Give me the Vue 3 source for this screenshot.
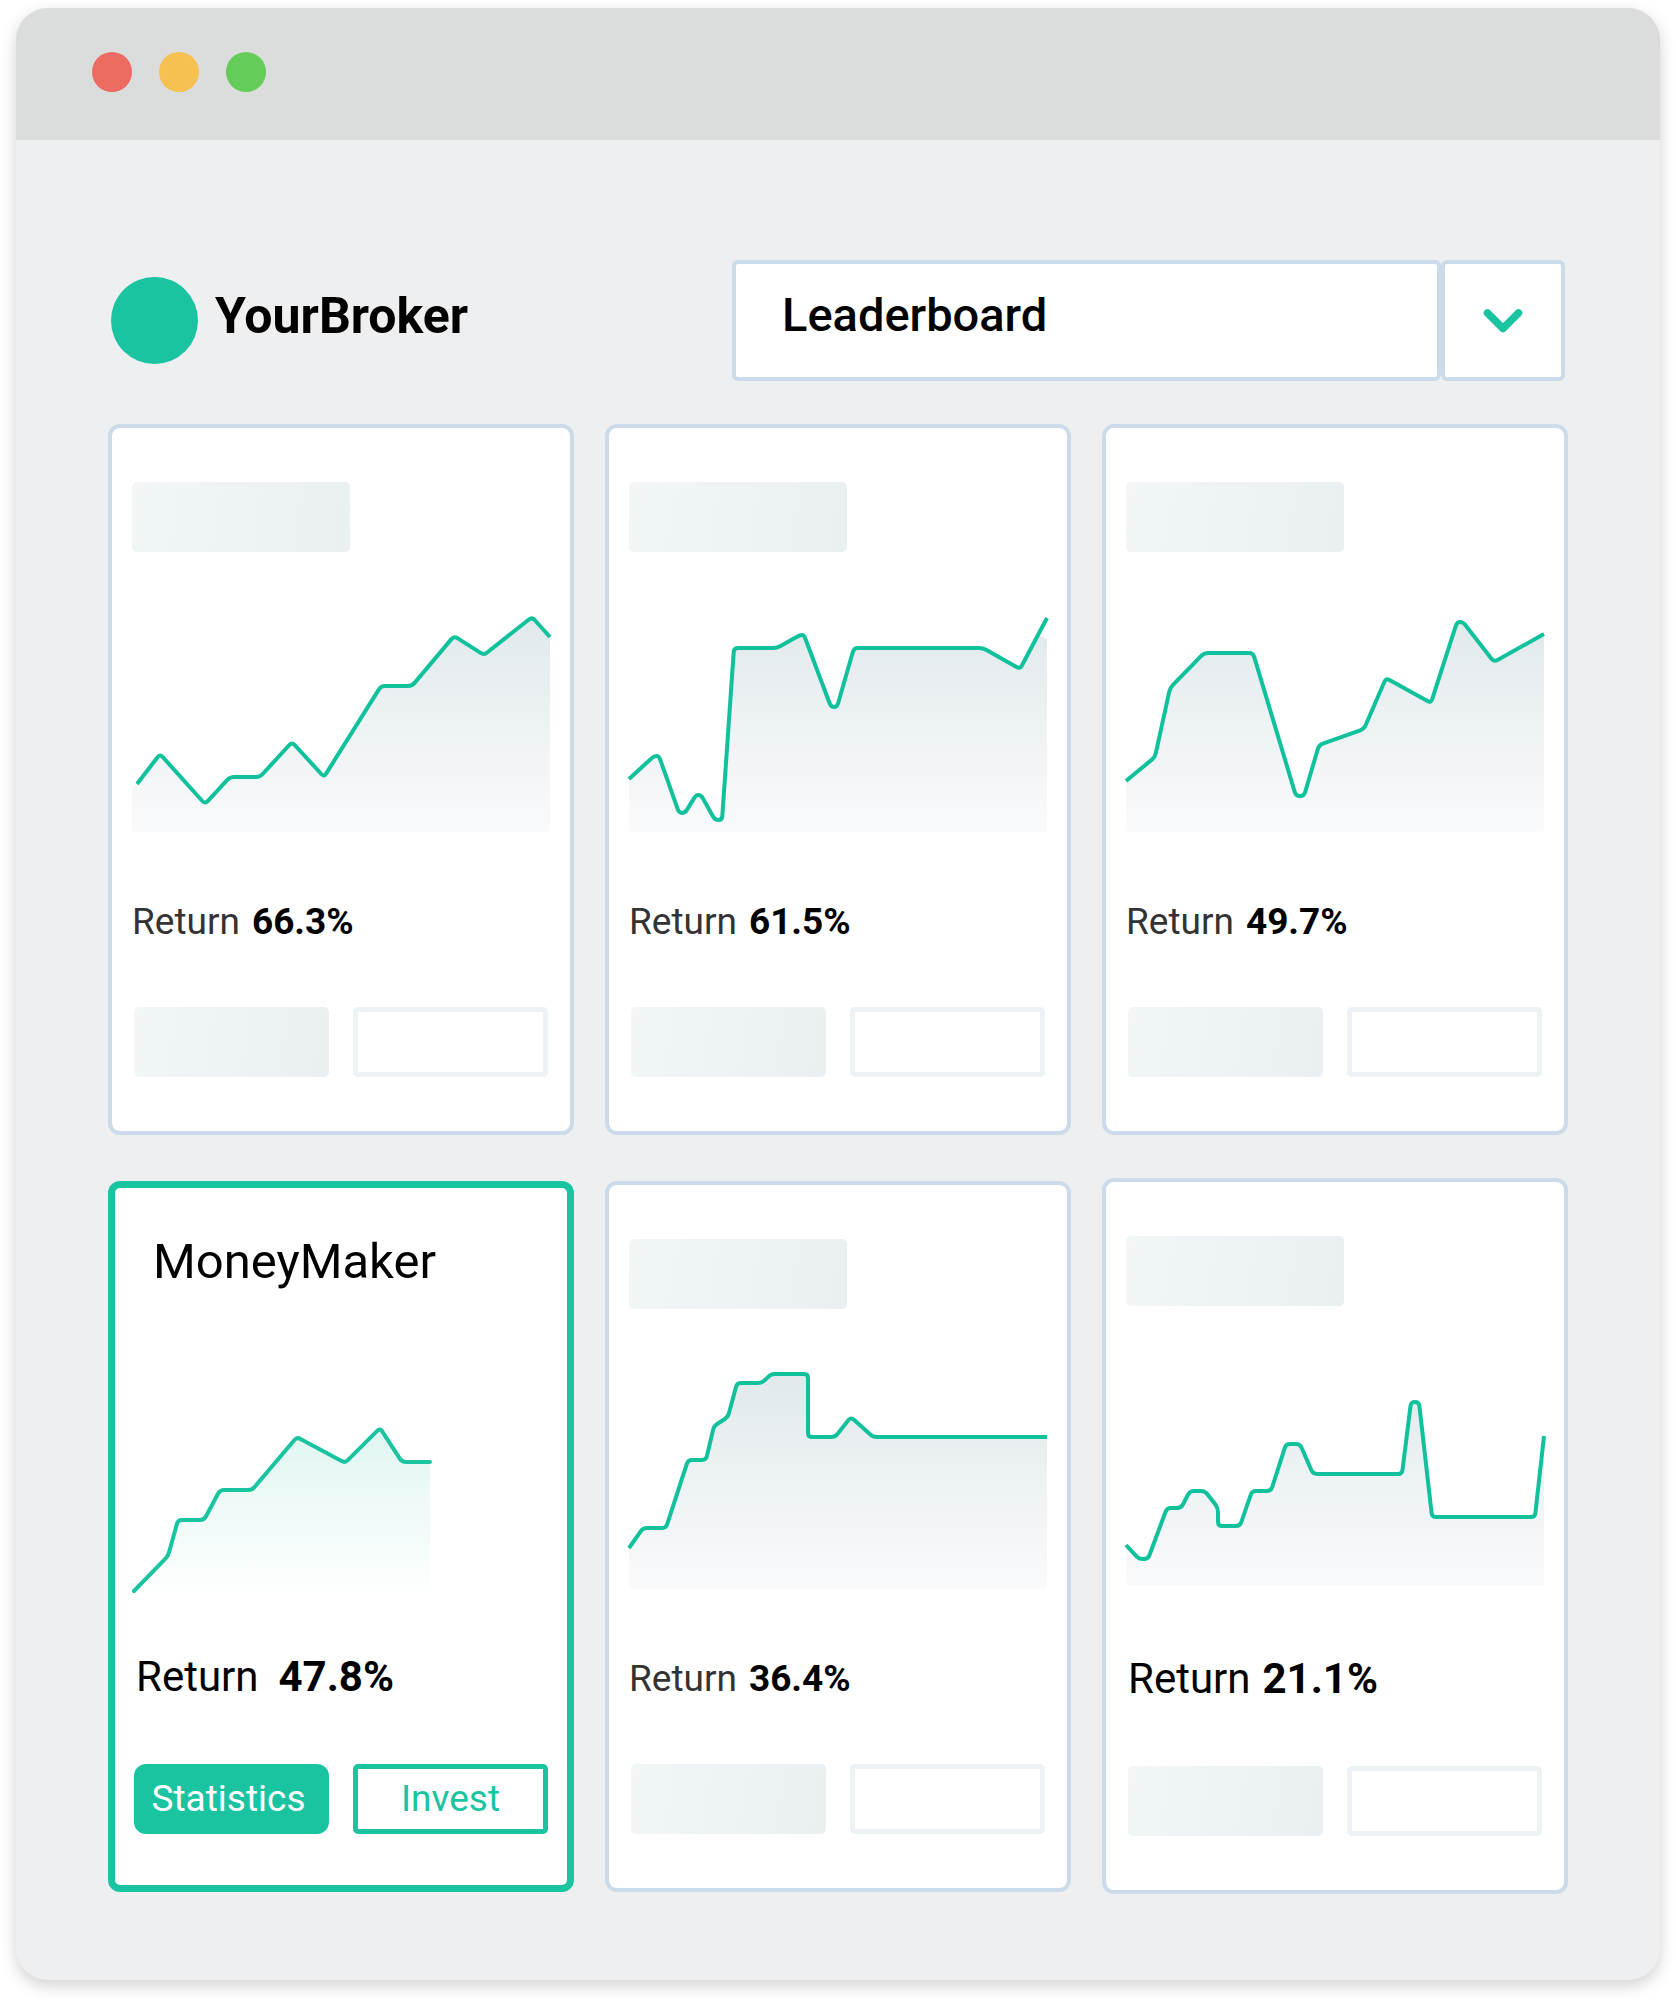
<script setup>
import { ref } from 'vue'

const view = ref('Leaderboard')

const cards = [
  {
    value: '66.3%',
    line: [[5, 174], [28, 144], [73, 194], [98, 167], [128, 167], [160, 132], [192, 167], [249, 76], [280, 76], [322, 26], [352, 45], [400, 7], [418, 27]],
    start: [[0, 179]],
    end: [],
  },
  {
    value: '61.5%',
    line: [[0, 169], [25, 146], [30, 146], [50, 203], [56, 203], [67, 185], [72, 185], [86, 210], [93, 210], [105, 38], [148, 38], [171, 25], [175, 25], [202, 97], [208, 97], [225, 38], [354, 38], [391, 59], [418, 8]],
    start: [],
    end: [[409, 25], [418, 29]],
    drop: 1,
  },
  {
    value: '49.7%',
    line: [[0, 171], [29, 147], [44, 78], [78, 43], [127, 43], [170, 186], [178, 186], [193, 135], [238, 119], [260, 68], [305, 93], [331, 12], [337, 12], [368, 52], [418, 24]],
    start: [],
    end: [[418, 30]],
  },
  {
    title: 'MoneyMaker',
    value: '47.8%',
    kind: 'featured',
    line: [[2, 224], [36, 189], [46, 153], [72, 153], [88, 123], [120, 123], [165, 70], [213, 96], [248, 61], [270, 95], [298, 95]],
    start: [],
    end: [],
  },
  {
    value: '36.4%',
    line: [[0, 181], [14, 161], [37, 161], [59, 93], [77, 93], [85, 59], [99, 50], [108, 16], [133, 16], [142, 7], [179, 7], [179, 70], [206, 70], [222, 50], [244, 70], [418, 70]],
    start: [],
    end: [],
  },
  {
    value: '21.1%',
    kind: 'strong',
    line: [[0, 181], [13, 195], [22, 195], [41, 144], [55, 144], [64, 127], [79, 127], [92, 144], [92, 162], [114, 162], [126, 127], [145, 127], [160, 80], [174, 80], [187, 110], [276, 110], [285, 38], [293, 38], [306, 153], [409, 153], [418, 72]],
    start: [],
    end: [],
  },
]

// Joins the points with straight segments whose corners are softened by a small curve.
function linePath(points, radius = 4) {
  const toward = ([ax, ay], [bx, by]) => {
    const length = Math.hypot(bx - ax, by - ay)
    const t = Math.min(radius, length / 2) / length
    return `${(ax + (bx - ax) * t).toFixed(1)} ${(ay + (by - ay) * t).toFixed(1)}`
  }
  let d = `M${points[0].join(' ')}`
  for (let i = 1; i < points.length - 1; i++) {
    d += `L${toward(points[i], points[i - 1])}Q${points[i].join(' ')} ${toward(points[i], points[i + 1])}`
  }
  return d + `L${points[points.length - 1].join(' ')}`
}

function areaPath(card) {
  const body = card.drop ? card.line.slice(0, -card.drop) : card.line
  const points = [...card.start, ...body, ...card.end]
  const left = points[0][0]
  const right = points[points.length - 1][0]
  const floor = card.kind === 'featured' ? 225 : 222
  return `${linePath(points)}V${floor - 4}Q${right} ${floor} ${right - 4} ${floor}H${left + 4}Q${left} ${floor} ${left} ${floor - 4}Z`
}
</script>

<template>
  <div class="window">
    <div class="titlebar">
      <span class="dot close"></span>
      <span class="dot minimize"></span>
      <span class="dot expand"></span>
    </div>
    <main class="page">
      <header class="header">
        <div class="brand">
          <span class="logo"></span>
          <span class="brand-name">YourBroker</span>
        </div>
        <div class="picker">
          <select v-model="view" class="picker-field" aria-label="View">
            <option>Leaderboard</option>
          </select>
          <button class="picker-toggle" type="button" aria-label="Open list">
            <svg width="40" height="24" viewBox="0 0 40 24" fill="none">
              <path d="M4.5 4L20 19.5L35.5 4" stroke="#1ac4a1" stroke-width="7.5" stroke-linecap="round" stroke-linejoin="round" />
            </svg>
          </button>
        </div>
      </header>
      <section class="grid">
        <article v-for="(card, i) in cards" :key="card.value" class="card" :class="card.kind">
          <h2 v-if="card.title" class="title">{{ card.title }}</h2>
          <div v-else class="title-blank"></div>
          <svg class="chart" viewBox="0 0 418 222" fill="none" aria-hidden="true">
            <defs>
              <linearGradient :id="`area-${i}`" gradientUnits="userSpaceOnUse" x1="0" y1="0" x2="0" y2="222">
                <stop offset="0" :stop-color="card.kind === 'featured' ? '#d3f2ec' : '#e0e8eb'" />
                <stop offset="0.5" :stop-color="card.kind === 'featured' ? '#e9f8f6' : '#edf2f4'" />
                <stop offset="1" :stop-color="card.kind === 'featured' ? '#fdfffe' : '#f9fafc'" />
              </linearGradient>
            </defs>
            <path :d="areaPath(card)" :fill="`url(#area-${i})`" />
            <path class="line" :d="linePath(card.line)" />
          </svg>
          <p class="return">
            <span class="return-label">Return</span>
            <strong>{{ card.value }}</strong>
          </p>
          <div class="actions">
            <template v-if="card.title">
              <button class="action solid" type="button">Statistics</button>
              <button class="action outline" type="button">Invest</button>
            </template>
            <template v-else>
              <div class="action solid"></div>
              <div class="action outline"></div>
            </template>
          </div>
        </article>
      </section>
    </main>
  </div>
</template>

<style>
body {
  margin: 0;
  background: #fff;
}
</style>

<style scoped>
* {
  box-sizing: border-box;
}

.window {
  margin: 8px 16px 24px;
  border-radius: 32px;
  overflow: hidden;
  background: #edeff1;
  box-shadow: 0 6px 16px rgba(0, 0, 0, 0.18);
  font-family: Roboto, "Liberation Sans", sans-serif;
  color: #000;
}

.titlebar {
  display: flex;
  gap: 27px;
  height: 132px;
  padding: 44px 76px;
  background: #dbdddc;
}

.dot {
  width: 40px;
  height: 40px;
  border-radius: 50%;
}

.close {
  background: #ed6c61;
}

.minimize {
  background: #f6c151;
}

.expand {
  background: #66cc59;
}

.page {
  padding: 120px 92px 86px;
}

.header {
  display: flex;
  justify-content: space-between;
  align-items: center;
  margin-bottom: 43px;
  padding: 0 3px;
}

.brand {
  display: flex;
  align-items: center;
  gap: 17px;
}

.logo {
  width: 87px;
  height: 87px;
  border-radius: 50%;
  background: #1ac4a1;
}

.brand-name {
  padding-bottom: 10px;
  font-size: 50px;
  font-weight: 700;
}

.picker {
  display: flex;
  flex: 0 1 833px;
  height: 121px;
}

.picker-field,
.picker-toggle {
  margin: 0;
  border: 4px solid #cbdbe9;
  border-radius: 6px;
  background: #fff;
}

.picker-field {
  appearance: none;
  flex: 1;
  min-width: 0;
  padding: 0 46px 12px;
  font-family: inherit;
  font-size: 47px;
  font-weight: 500;
  color: #000;
}

.picker-toggle {
  display: flex;
  align-items: center;
  justify-content: center;
  width: 124px;
  padding: 0;
}

.grid {
  display: grid;
  grid-template-columns: repeat(3, 1fr);
  align-items: center;
  gap: 43px 31px;
}

.card {
  padding: 54px 20px;
  border: 4px solid #cbdbe9;
  border-radius: 12px;
  background: #fff;
}

.featured {
  padding: 51px 17px;
  border: 7px solid #1ac4a1;
}

.title,
.title-blank {
  height: 70px;
  margin: 0 0 58px;
}

.title {
  padding-left: 21px;
  font-size: 49px;
  line-height: 46px;
  font-weight: 400;
}

.title-blank {
  width: 218px;
  border-radius: 5px;
  background: linear-gradient(100deg, #f2f6f7, #eaeff2);
}

.chart {
  display: block;
  width: 100%;
  overflow: visible;
}

.line {
  stroke: #11c19c;
  stroke-width: 4;
}

.featured .line {
  stroke: #1ac4a1;
  stroke-linecap: round;
}

.return {
  display: flex;
  gap: 12px;
  margin: 69px 0 64px;
  font-size: 37px;
  line-height: 42px;
}

.return-label {
  color: #333;
}

.featured .return,
.strong .return {
  padding-left: 2px;
  font-size: 42px;
}

.featured .return {
  gap: 20px;
  margin: 67px 0 66px;
  padding-left: 4px;
}

.strong .return {
  gap: 12px;
  line-height: 47px;
}

.featured .return-label,
.strong .return-label {
  color: #000;
}

.actions {
  display: grid;
  grid-template-columns: 1fr 1fr;
  gap: 24px;
  padding: 0 2px;
}

.action {
  height: 70px;
  margin: 0;
  padding: 0;
  border: 0;
  border-radius: 5px;
  font-family: inherit;
  font-size: 37px;
}

.solid {
  background: linear-gradient(100deg, #f2f6f7, #eaeff2);
}

.outline {
  border: 5px solid #edf2f4;
  background: #fff;
}

.featured .solid {
  padding-right: 6px;
  border-radius: 12px;
  background: #1ac4a1;
  color: #fff;
}

.featured .outline {
  border-color: #1ac4a1;
  color: #1ac4a1;
}
</style>
